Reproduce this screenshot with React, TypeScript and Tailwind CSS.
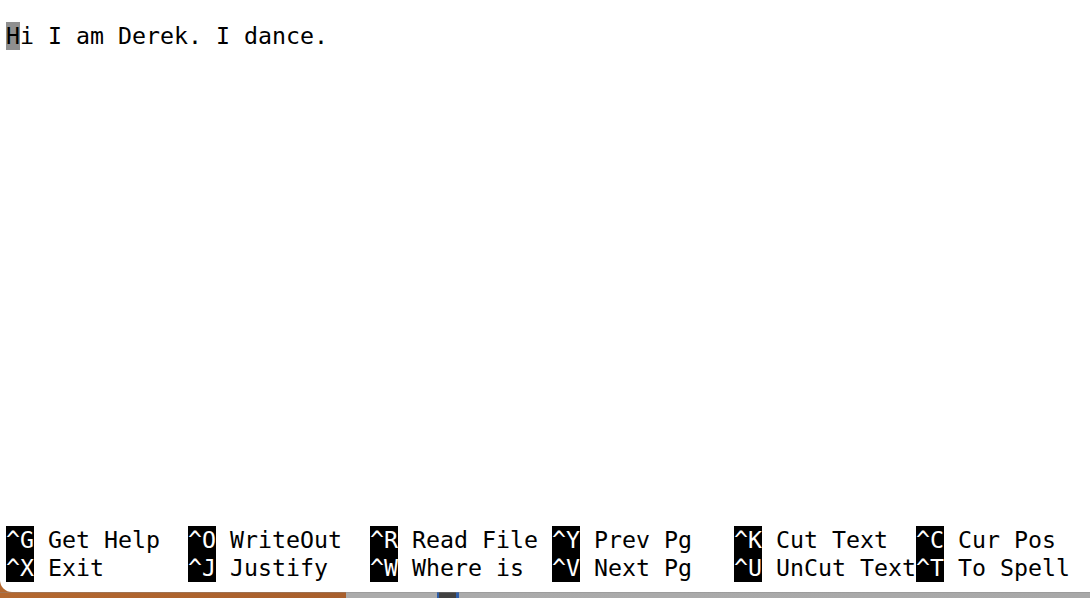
import React from "react";

const mono = { fontFamily: '"DejaVu Sans Mono", "Liberation Mono", monospace' };

type Item = [string, string];

const row1: Item[] = [
  ["^G", "Get Help"],
  ["^O", "WriteOut"],
  ["^R", "Read File"],
  ["^Y", "Prev Pg"],
  ["^K", "Cut Text"],
  ["^C", "Cur Pos"],
];
const row2: Item[] = [
  ["^X", "Exit"],
  ["^J", "Justify"],
  ["^W", "Where is"],
  ["^V", "Next Pg"],
  ["^U", "UnCut Text"],
  ["^T", "To Spell"],
];

function ShortcutRow({ items }: { items: Item[] }) {
  return (
    <div className="flex h-[28px] items-stretch whitespace-pre">
      {items.map(([k, label]) => (
        <div key={k} className="flex w-[182px] shrink-0 items-stretch">
          <span className="flex items-center bg-black text-white">{k}</span>
          <span className="flex items-center text-black">{" " + label}</span>
        </div>
      ))}
    </div>
  );
}

export default function App() {
  return (
    <div
      className="flex h-[598px] w-[1090px] flex-col overflow-hidden bg-[linear-gradient(to_right,#b4682f_0px,#a85f2c_346px,#ababab_346px,#ababab_437px,#2f5ea8_437px,#2f5ea8_439px,#424242_439px,#424242_456px,#2f5ea8_456px,#2f5ea8_459px,#ababab_459px,#a8a8a8_1090px)]"
      style={mono}
    >
      <div className="flex h-[592px] shrink-0 flex-col overflow-hidden rounded-bl-[12px] bg-white pl-[6px] pt-[22px] text-[23.25px] leading-[28px] text-black">
        <div className="flex h-[28px] items-stretch whitespace-pre">
          <span className="flex items-center bg-[#8f8f8f]">H</span>
          <span className="flex items-center">i I am Derek. I dance.</span>
        </div>
        <div className="flex-1" />
        <ShortcutRow items={row1} />
        <ShortcutRow items={row2} />
        <div className="h-[10px]" />
      </div>
      <div className="h-px w-full bg-[#8a8a8a] opacity-40" />
    </div>
  );
}
